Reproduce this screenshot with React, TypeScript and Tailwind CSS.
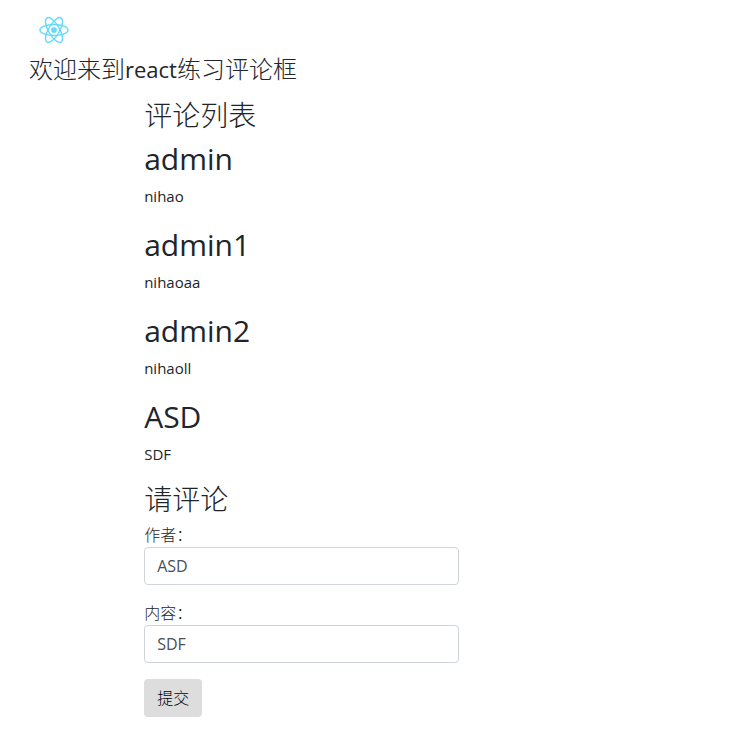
import React, { useState } from "react";

type Comment = { author: string; content: string };

const comments: Comment[] = [
  { author: "admin", content: "nihao" },
  { author: "admin1", content: "nihaoaa" },
  { author: "admin2", content: "nihaoll" },
  { author: "ASD", content: "SDF" },
];

function Logo() {
  return (
    <svg
      viewBox="-11.5 -10.2 23 20.4"
      className="ml-[10px] h-7 w-[30px]"
      role="img"
      aria-label="React"
    >
      <circle r="2.2" fill="#61dafb" />
      <g fill="none" stroke="#61dafb" strokeWidth="1.1">
        <ellipse rx="10.8" ry="4.2" />
        <ellipse rx="10.8" ry="4.2" transform="rotate(60)" />
        <ellipse rx="10.8" ry="4.2" transform="rotate(120)" />
      </g>
    </svg>
  );
}

type FieldProps = {
  id: string;
  label: string;
  value: string;
  onChange: (value: string) => void;
};

function Field({ id, label, value, onChange }: FieldProps) {
  return (
    <div className="mb-4">
      <label htmlFor={id} className="block leading-6">
        {label}
      </label>
      <input
        id={id}
        type="text"
        value={value}
        onChange={(event) => onChange(event.target.value)}
        className="block h-[38px] w-full rounded border border-[#ced4da] bg-white px-3 text-[#495057]"
      />
    </div>
  );
}

export default function App() {
  const [author, setAuthor] = useState("ASD");
  const [content, setContent] = useState("SDF");

  return (
    <div className="mx-auto max-w-[721px] px-[15px] pt-4 font-['Open_Sans','Noto_Sans_CJK_SC_Light','Noto_Sans_CJK_SC',sans-serif] text-base text-[#212529]">
      <header>
        <Logo />
        <h3 className="mt-2.5 text-2xl leading-[30px]">
          欢迎来到<span className="text-[22px]">react</span>练习评论框
        </h3>
      </header>
      <main className="mt-[15px] ml-[16.6667%] w-1/2 pr-[31px]">
        <h3 className="mb-2 text-[28px] leading-8">评论列表</h3>
        {comments.map((comment) => (
          <article key={comment.author}>
            <h2 className="mb-[5px] text-[30px] leading-10">{comment.author}</h2>
            <p className="mb-[17px] text-[15px] leading-6">{comment.content}</p>
          </article>
        ))}
        <h3 className="mb-2 text-[28px] leading-8">请评论</h3>
        <form onSubmit={(event) => event.preventDefault()}>
          <Field id="author" label="作者：" value={author} onChange={setAuthor} />
          <Field id="content" label="内容：" value={content} onChange={setContent} />
          <button
            type="submit"
            className="h-[38px] rounded bg-[#dddddd] px-[13px] leading-6 text-black"
          >
            提交
          </button>
        </form>
      </main>
    </div>
  );
}
